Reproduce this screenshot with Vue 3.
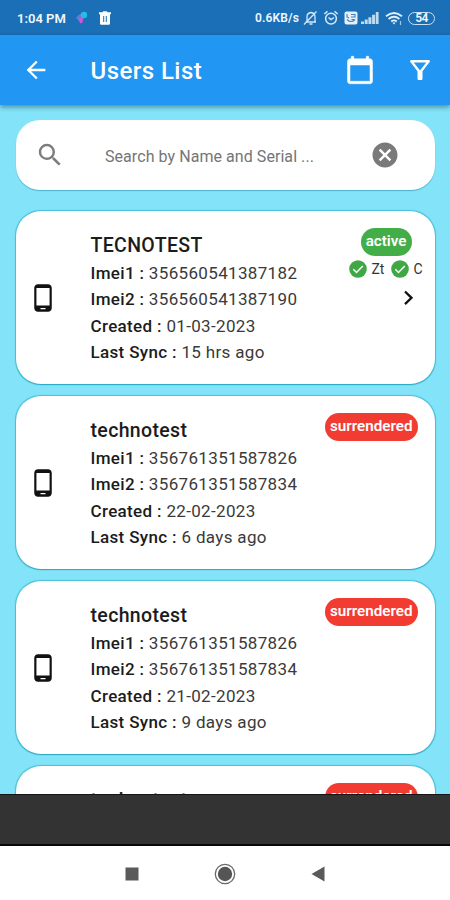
<template>
    <div class="screen">
        <div class="status-bar">
            <span class="clock">1:04 PM</span>
            <svg class="app-dot" width="14" height="16" viewBox="0 0 14 16">
                <path d="M1 7.5 5.5 3.5 8 8.5 4.5 12z" fill="#637bd8" />
                <circle cx="9" cy="5" r="3.2" fill="#21bfe2" />
                <path d="M4 8 8.500 7.500 7.500 12.500 5 13.500z" fill="#c85bd4" />
            </svg>
            <svg class="trash" width="14" height="16" viewBox="0 0 14 16">
                <path d="M1 2.200h3.500l.7-1h3.600l.7 1H13v2H1z" fill="#fff" />
                <path fill-rule="evenodd" d="M2 4h10v9.500q0 1.300-1.300 1.300H3.300Q2 14.800 2 13.500zM5.200 6v6h1V6zM7.800 6v6h1V6z" fill="#fff" />
            </svg>
            <div class="status-right">
                <span class="speed">0.6KB/s</span>
                <svg width="15" height="16" viewBox="0 0 15 16" fill="none" stroke="#d5e9f8" stroke-width="1.3">
                    <path d="M2.500 12H13M4 11.500V7q0-4 4-4.500 4 .5 4 4.500v4.500M6.500 14h3M1 14.500 13.500 1.500" />
                </svg>
                <svg class="alarm" width="16" height="16" viewBox="0 0 16 16" fill="none" stroke="#d5e9f8" stroke-width="1.5">
                    <circle cx="8" cy="8.600" r="5.400" />
                    <path d="M1.300 4 4.500 1.400M14.700 4 11.500 1.400M5.500 7.500 8 9.500l3-2" />
                </svg>
                <svg class="volte" width="14" height="14" viewBox="0 0 14 14">
                    <rect x=".5" y=".5" width="13" height="13" rx="2" fill="#e3f0fa" />
                    <path d="M3 3v3l2 1M7 3.500h4v2.500H7M3 8.500q4 4 8 0M7.500 8.500h3" fill="none" stroke="#3c83bd" stroke-width="1.100" />
                </svg>
                <svg class="signal" width="18" height="14" viewBox="0 0 18 14" fill="#bddbf1">
                    <path d="M0 10.500h3V13H0zM3.700 8.500h3V13h-3zM7.400 6.200h3V13h-3zM11.100 3.700h3V13h-3zM14.800 1h2.800v12h-2.800z" />
                </svg>
                <svg class="wifi" width="18" height="15" viewBox="0 0 18 15" fill="none" stroke="#e3f0fa" stroke-width="1.800">
                    <path d="M1 5.300Q9-1.300 17 5.300M3.600 8Q9 3.600 14.400 8M6.200 10.500Q9 8.200 11.800 10.500" />
                    <path d="m7.300 11.500 1.700 2 1.700-2z" fill="#e3f0fa" stroke="none" />
                    <path d="M15.500 10v4" stroke="#9cc7e8" stroke-width="1.200" />
                </svg>
                <span class="battery">54</span>
            </div>
        </div>

        <header class="app-bar">
            <svg class="back" width="28" height="28" viewBox="0 0 24 24">
                <path d="M20 11H7.830l5.590-5.590L12 4l-8 8 8 8 1.410-1.410L7.830 13H20v-2z" fill="#fff" />
            </svg>
            <h1>Users List</h1>
            <svg class="calendar" width="30" height="30" viewBox="0 0 24 24">
                <path d="M20 3h-1V1h-2v2H7V1H5v2H4c-1.100 0-2 .9-2 2v16c0 1.100.9 2 2 2h16c1.100 0 2-.9 2-2V5c0-1.100-.9-2-2-2zm0 18H4V8h16v13z" fill="#fff" stroke="#fff" stroke-width=".4" />
            </svg>
            <svg class="filter" width="30" height="30" viewBox="0 0 24 24">
                <path d="M7 6h10l-5.010 6.300L7 6zm-2.750-.390C6.270 8.200 10 13 10 13v6c0 .550.450 1 1 1h2c.550 0 1-.450 1-1v-6s3.720-4.800 5.740-7.390c.510-.660.040-1.610-.790-1.610H5.040c-.830 0-1.300.950-.790 1.610z" fill="#fff" />
            </svg>
        </header>

        <main class="content">
            <div class="search">
                <svg class="lens" width="30" height="30" viewBox="0 0 24 24">
                    <path d="M15.500 14h-.790l-.280-.270A6.471 6.471 0 0 0 16 9.500 6.500 6.500 0 1 0 9.500 16c1.610 0 3.090-.590 4.230-1.570l.270.280v.790l5 4.990L20.490 19l-4.990-5zm-6 0C7.010 14 5 11.990 5 9.500S7.010 5 9.500 5 14 7.010 14 9.500 11.990 14 9.500 14z" fill="#7d7d7d" />
                </svg>
                <span class="placeholder">Search by Name and Serial ...</span>
                <svg width="30" height="30" viewBox="0 0 24 24">
                    <path d="M12 2C6.470 2 2 6.470 2 12s4.470 10 10 10 10-4.470 10-10S17.530 2 12 2zm5 13.590L15.590 17 12 13.410 8.410 17 7 15.590 10.590 12 7 8.410 8.410 7 12 10.590 15.590 7 17 8.410 13.410 12 17 15.590z" fill="#7a7a7a" />
                </svg>
            </div>

            <article v-for="(user, i) in users" :key="i" class="card">
                <svg class="phone" width="30" height="30" viewBox="0 0 24 24">
                    <path d="M16 1H8C6.340 1 5 2.340 5 4v16c0 1.660 1.340 3 3 3h8c1.660 0 3-1.340 3-3V4c0-1.660-1.340-3-3-3zm-2 20h-4v-1h4v1zm3.250-3H6.750V4h10.500v14z" fill="#111" />
                </svg>
                <div class="info">
                    <h2>{{ user.name }}</h2>
                    <p><b>Imei1 :</b> {{ user.imei1 }}</p>
                    <p><b>Imei2 :</b> {{ user.imei2 }}</p>
                    <p><b>Created :</b> {{ user.created }}</p>
                    <p><b>Last Sync :</b> {{ user.sync }}</p>
                </div>
                <div class="side" :class="{ 'side-active': user.active }">
                    <span class="badge">{{ user.active ? 'active' : 'surrendered' }}</span>
                    <div v-if="user.active" class="checks">
                        <template v-for="tag in ['Zt', 'C']" :key="tag">
                            <svg width="18" height="18" viewBox="0 0 18 18">
                                <circle cx="9" cy="9" r="8.800" fill="#3fa845" />
                                <path d="m4.300 9.300 3.200 3.200 6.300-6.600" fill="none" stroke="#fff" stroke-width="1.500" />
                            </svg>
                            <span>{{ tag }}</span>
                        </template>
                    </div>
                    <svg v-if="user.active" class="chevron" width="12" height="18" viewBox="0 0 12 18">
                        <path d="m2 2.500 6.500 6.300L2 15.100" fill="none" stroke="#111" stroke-width="2.300" />
                    </svg>
                </div>
            </article>
        </main>

        <div class="bottom-strip"></div>
        <nav class="nav-bar">
            <svg width="14" height="14" viewBox="0 0 14 14">
                <rect x=".5" y=".5" width="13" height="13" fill="#5a5a5a" />
            </svg>
            <svg width="22" height="22" viewBox="0 0 22 22">
                <circle cx="11" cy="11" r="9.700" fill="none" stroke="#6a6a6a" stroke-width="1.300" />
                <circle cx="11" cy="11" r="7.200" fill="#555" />
            </svg>
            <svg width="14" height="16" viewBox="0 0 14 16">
                <path d="M.5 8 13.500.5v15z" fill="#5a5a5a" />
            </svg>
        </nav>
    </div>
</template>

<script setup>
const users = [
    { name: "TECNOTEST", imei1: "356560541387182", imei2: "356560541387190", created: "01-03-2023", sync: "15 hrs ago", active: true },
    { name: "technotest", imei1: "356761351587826", imei2: "356761351587834", created: "22-02-2023", sync: "6 days ago" },
    { name: "technotest", imei1: "356761351587826", imei2: "356761351587834", created: "21-02-2023", sync: "9 days ago" },
    { name: "technotest" , imei1: "356761351587826", imei2: "356761351587834", created: "21-02-2023", sync: "9 days ago" },
];
</script>

<style>
body {
    margin: 0;
}
</style>

<style scoped>
.screen {
    display: flex;
    flex-direction: column;
    width: 450px;
    height: 900px;
    overflow: hidden;
    background: #fff;
    font-family: Roboto, "Liberation Sans", sans-serif;
}

svg {
    display: block;
    flex: none;
}

/* Status bar */
.status-bar {
    display: flex;
    align-items: center;
    flex: none;
    height: 35px;
    box-sizing: border-box;
    padding: 1px 15px 0 17px;
    background: #1a6fb7;
    color: #f0f7fd;
}

.clock {
    width: 50px;
    font-size: 13px;
    font-weight: 600;
    letter-spacing: 0;
    white-space: nowrap;
}

.app-dot {
    margin-left: 8px;
}

.trash {
    margin-left: 9px;
}

.status-right {
    display: flex;
    align-items: center;
    margin-left: auto;
}

.speed {
    width: 48px;
    font-size: 12px;
    font-weight: 600;
    letter-spacing: 0.15px;
    white-space: nowrap;
}

.alarm {
    margin-left: 5px;
}

.volte {
    margin-left: 5px;
}

.signal {
    margin-left: 3px;
}

.wifi {
    margin-left: 6px;
}

.battery {
    width: 27px;
    height: 13px;
    margin-left: 5px;
    box-sizing: border-box;
    border: 1.5px solid #c9e1f4;
    border-radius: 7px;
    font-size: 12px;
    font-weight: 600;
    letter-spacing: -0.5px;
    line-height: 11px;
    text-align: center;
}

/* App bar */
.app-bar {
    position: relative;
    z-index: 1;
    display: flex;
    align-items: center;
    flex: none;
    height: 70px;
    box-sizing: border-box;
    padding: 0 15px 0 22px;
    background: #2196f3;
    box-shadow: 0 2px 5px rgba(0, 0, 0, 0.4);
}

.app-bar h1 {
    margin: 2px auto 0 40.5px;
    color: #fff;
    font-size: 24px;
    font-weight: 500;
    letter-spacing: 0.45px;
}

.filter {
    margin-left: 30px;
}

/* List */
.content {
    flex: none;
    height: 689px;
    box-sizing: border-box;
    padding: 15px 15.5px 0;
    overflow: hidden;
    background: #82e3f9;
}

.search {
    display: flex;
    align-items: center;
    height: 70px;
    box-sizing: border-box;
    margin-bottom: 21px;
    padding: 0 34.5px 0 19px;
    border-radius: 24px;
    background: #fff;
    box-shadow: 0 1px 1px rgba(0, 110, 130, 0.4);
}

.placeholder {
    margin: 3px auto 0 40.5px;
    color: #757575;
    font-size: 16px;
    letter-spacing: 0.06px;
}

.card {
    display: flex;
    height: 173px;
    box-sizing: border-box;
    margin-bottom: 12px;
    padding: 0 17px 0 12px;
    border-radius: 25px;
    background: #fff;
    box-shadow: 0 0 1px 0.5px rgba(0, 150, 175, 0.45), 0 1px 1px rgba(0, 120, 140, 0.4);
}

.phone {
    align-self: center;
}

.info {
    flex: 1;
    margin-left: 33px;
    padding-top: 20px;
    white-space: nowrap;
}

.info h2 {
    margin: 0;
    color: #1c1c1c;
    font-size: 19.5px;
    font-weight: 500;
    letter-spacing: 0.35px;
    line-height: 29px;
}

.info p {
    margin: 0;
    color: #3a3a3a;
    font-size: 17px;
    letter-spacing: 0.34px;
    line-height: 26.4px;
}

.info b {
    color: #1c1c1c;
    font-weight: 500;
}

.side {
    display: flex;
    flex-direction: column;
    align-items: flex-end;
    padding-top: 17px;
}

.badge {
    height: 28px;
    box-sizing: border-box;
    padding: 0 5px;
    border-radius: 14px;
    background: #f23b31;
    color: #fff;
    font-size: 15.2px;
    font-weight: 600;
    line-height: 27px;
}

.side-active .badge {
    margin-right: 6px;
    background: #43ae48;
}

.checks {
    display: flex;
    align-items: center;
    gap: 4px;
    margin: 4px -5px 0 0;
    color: #333;
    font-size: 14px;
    line-height: 18px;
}

.checks span + svg {
    margin-left: 3px;
}

.chevron {
    margin: 11px 3px 0 0;
}

/* System navigation */
.bottom-strip {
    flex: none;
    height: 52px;
    box-sizing: border-box;
    border-top: 1px solid #151515;
    border-bottom: 2px solid #080808;
    background: #333;
}

.nav-bar {
    display: flex;
    align-items: center;
    justify-content: space-between;
    flex: 1;
    padding: 1px 125px 0;
}
</style>
